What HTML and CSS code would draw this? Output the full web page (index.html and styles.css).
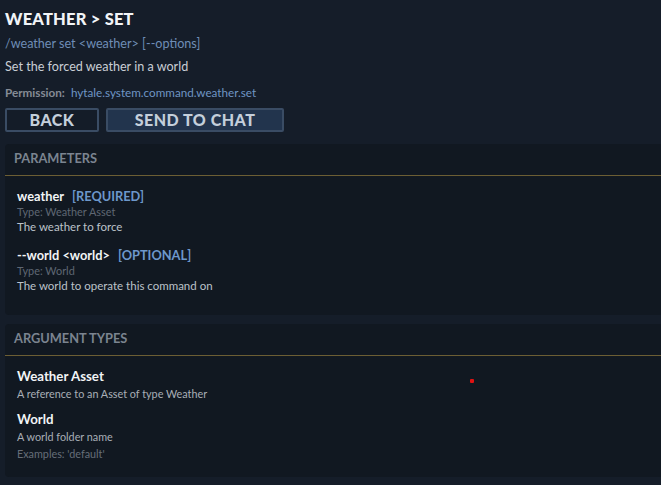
FILE: index.html
```html
<!DOCTYPE html>
<html>
<head>
<meta charset="utf-8">
<link rel="stylesheet" href="styles.css">
</head>
<body>
<div class="page">
  <header class="head">
    <h1 class="title">WEATHER &gt; SET</h1>
    <div class="usage">/weather set &lt;weather&gt; [--options]</div>
    <div class="desc">Set the forced weather in a world</div>
    <div class="perm"><span class="perm-label">Permission:</span><span class="perm-value">hytale.system.command.weather.set</span></div>
    <div class="actions">
      <button class="btn btn-back">BACK</button>
      <button class="btn btn-send">SEND TO CHAT</button>
    </div>
  </header>

  <section class="panel panel-params">
    <div class="panel-head">PARAMETERS</div>
    <div class="panel-body">
      <div class="param">
        <div class="param-name">weather<span class="tag">[REQUIRED]</span></div>
        <div class="param-type">Type: Weather Asset</div>
        <div class="param-desc">The weather to force</div>
      </div>
      <div class="param">
        <div class="param-name">--world &lt;world&gt;<span class="tag">[OPTIONAL]</span></div>
        <div class="param-type">Type: World</div>
        <div class="param-desc">The world to operate this command on</div>
      </div>
    </div>
  </section>

  <section class="panel panel-types">
    <div class="panel-head">ARGUMENT TYPES</div>
    <div class="panel-body">
      <div class="atype">
        <div class="atype-name">Weather Asset</div>
        <div class="atype-desc">A reference to an Asset of type Weather</div>
      </div>
      <div class="atype">
        <div class="atype-name">World</div>
        <div class="atype-desc">A world folder name</div>
        <div class="atype-ex">Examples: 'default'</div>
      </div>
    </div>
  </section>

  <div class="marker"></div>
</div>
</body>
</html>
```

FILE: styles.css
```css
html, body {
  margin: 0;
  padding: 0;
  background: #151d29;
  overflow: hidden;
}
body {
  font-family: Lato, "Noto Sans", sans-serif;
  color: #c9ced5;
}
.page {
  position: relative;
  width: 661px;
  height: 485px;
  padding: 9px 0 0 5px;
  box-sizing: border-box;
}
.title {
  margin: 0;
  font-size: 16.5px;
  line-height: 20px;
  font-weight: 900;
  color: #f1f4f7;
  letter-spacing: 0.2px;
}
.usage {
  margin-top: 7px;
  font-size: 12.6px;
  line-height: 16px;
  color: #6f8db6;
}
.desc {
  margin-top: 7px;
  font-size: 12.6px;
  line-height: 16px;
  color: #c9ced5;
}
.perm {
  margin-top: 10px;
  font-size: 11.7px;
  line-height: 14px;
  display: flex;
  gap: 6px;
}
.perm-label {
  font-weight: 700;
  color: #858c96;
}
.perm-value {
  color: #6f95c4;
}
.actions {
  margin-top: 9px;
  display: flex;
  gap: 7px;
}
.btn {
  height: 24px;
  box-sizing: border-box;
  border: 2px solid #3a4c64;
  border-radius: 2px;
  font-family: Lato, "Noto Sans", sans-serif;
  font-weight: 900;
  font-size: 16px;
  line-height: 20px;
  color: #c4cfdb;
  padding: 0;
  letter-spacing: 0.5px;
}
.btn-back {
  width: 94px;
  background: #141c28;
}
.btn-send {
  width: 178px;
  background: #22344d;
}
.panel {
  margin-top: 12px;
  margin-right: -8px;
  background: #111821;
  border-radius: 4px;
}
.panel-types {
  margin-top: 9px;
}
.panel-head {
  padding: 7px 9px 9px;
  font-size: 12.8px;
  line-height: 15px;
  font-weight: 700;
  color: #7b8490;
  border-bottom: 1px solid #6c5e34;
}
.panel-body {
  padding: 12px 12px 9px;
}
.param {
  margin-bottom: 13px;
}
.param-name {
  font-size: 12.8px;
  line-height: 16px;
  font-weight: 700;
  color: #f2f4f6;
}
.tag {
  margin-left: 8px;
  color: #6d97cb;
}
.param-type {
  margin-top: 1px;
  font-size: 10.9px;
  line-height: 14px;
  color: #5f6773;
}
.param-desc {
  margin-top: 1px;
  font-size: 11.5px;
  line-height: 14px;
  color: #bcc2c9;
}
.panel-types .panel-body {
  padding: 12px 12px 16px;
}
.atype + .atype {
  margin-top: 10px;
}
.atype-name {
  font-size: 13.3px;
  line-height: 16px;
  font-weight: 700;
  color: #f2f4f6;
}
.atype-desc {
  margin-top: 3px;
  font-size: 10.8px;
  line-height: 14px;
  color: #a9afb7;
}
.atype-ex {
  margin-top: 3px;
  font-size: 10.8px;
  line-height: 14px;
  color: #666e79;
}
.marker {
  position: absolute;
  left: 470px;
  top: 379px;
  width: 4px;
  height: 4px;
  border-radius: 1px;
  background: #e01212;
}
```
